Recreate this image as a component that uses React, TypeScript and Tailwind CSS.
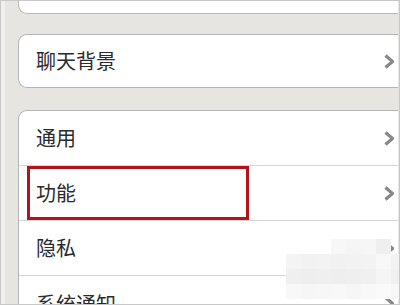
import React from "react";

const rows = ["通用", "功能", "隐私", "系统通知"];

// pixelated watermark blocks in the lower right corner
const mosaic: { x: number; y: number; c: string }[] = [
  ...["#f7f7f7", "#f5f5f5", "#f6f6f6", "#efefef"].map((c, i) => ({ x: 330 + i * 15, y: 238, c })),
  ...["#f4f4f4", "#f2f2f2", "#f3f3f3", "#f1f1f1", "#f2f2f2", "#f3f3f3", "#f8f8f8", "#f2f2f2"].map((c, i) => ({ x: 285 + i * 15, y: 253, c })),
  ...["#efefef", "#eeeeee", "#efefef", "#eeeeee", "#efefef", "#f0f0f0", "#f5f5f5", "#f0f0f0"].map((c, i) => ({ x: 285 + i * 15, y: 268, c })),
  ...["#f8f8f8", "#f6f6f6", "#f7f7f7", "#f8f8f8", "#f6f6f6", "#f8f8f8", "#fafafa", "#f7f7f7"].map((c, i) => ({ x: 285 + i * 15, y: 283, c })),
];

function Chevron() {
  return (
    <svg width="10" height="15" viewBox="0 0 10 15" className="shrink-0">
      <polyline points="1.5,1.5 8.5,7.5 1.5,13.5" fill="none" stroke="#888888" strokeWidth="3.2" strokeLinejoin="round" />
    </svg>
  );
}

function Row({ label, last }: { label: string; last?: boolean }) {
  return (
    <div className={`h-[55px] shrink-0 flex items-center justify-between pl-[17px] pr-[4px] ${last ? "" : "border-b border-[#d6d6d6]"}`}>
      <span className="text-[20px] text-[#2b2b2b] leading-none">{label}</span>
      <Chevron />
    </div>
  );
}

export default function App() {
  return (
    <div
      className="relative w-[400px] h-[305px] overflow-hidden border border-[#c8c8c8] bg-[#e7e5e1] flex"
      style={{ fontFamily: '"Noto Sans CJK SC", "Noto Sans", sans-serif' }}
    >
      <div className="w-[4px] shrink-0 bg-[#f1f0ec]" />
      <div className="flex-1 flex flex-col pl-[13px] pr-[1px]">
        <div className="h-[13px] shrink-0 bg-white border border-t-0 border-r-0 border-[#b8b8b8] rounded-bl-[9px]" />
        <div className="mt-[20px] h-[54px] shrink-0 bg-white border border-r-0 border-[#b4b4b4] rounded-l-[9px] flex items-center justify-between pl-[17px] pr-[4px]">
          <span className="text-[20px] text-[#2b2b2b] leading-none">聊天背景</span>
          <Chevron />
        </div>
        <div className="mt-[22px] shrink-0 bg-white border border-r-0 border-b-0 border-[#b4b4b4] rounded-tl-[9px] flex flex-col">
          {rows.map((r, i) => (
            <Row key={r} label={r} last={i === rows.length - 1} />
          ))}
        </div>
      </div>

      <div className="absolute left-[26px] top-[165px] w-[222px] h-[54px] border-[3px] border-[#b3141c]" />

      {mosaic.map((m, i) => (
        <div
          key={i}
          className="absolute w-[15px] h-[15px]"
          style={{ left: m.x, top: m.y, backgroundColor: m.c }}
        />
      ))}
    </div>
  );
}
